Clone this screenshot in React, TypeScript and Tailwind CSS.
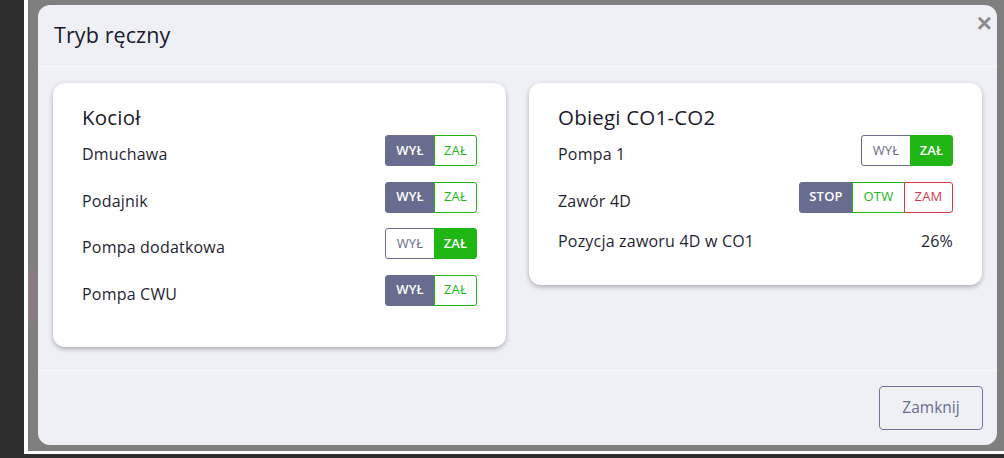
import { useState } from 'react';

type Tone = 'slate' | 'green' | 'red';

const activeCls: Record<Tone, string> = {
  slate: 'bg-[#686c8f] border-[#686c8f] text-white',
  green: 'bg-[#20b614] border-[#20b614] text-white',
  red: 'bg-[#d63a4a] border-[#d63a4a] text-white',
};

const idleCls: Record<Tone, string> = {
  slate: 'bg-white border-[#686c8f] text-[#686c8f]',
  green: 'bg-white border-[#20b614] text-[#20b614]',
  red: 'bg-white border-[#d63a4a] text-[#d63a4a]',
};

type Option = { label: string; tone: Tone; width: string };

function Segmented({ options, value, onChange }: { options: Option[]; value: number; onChange: (i: number) => void }) {
  return (
    <div className="flex h-[31px]">
      {options.map((o, i) => (
        <button
          key={o.label}
          onClick={() => onChange(i)}
          className={`${o.width} h-full border text-[13px] tracking-[0.2px] ${
            i === value ? `font-semibold ${activeCls[o.tone]}` : `font-medium ${idleCls[o.tone]}`
          } ${i === 0 ? 'rounded-l-[3px]' : '-ml-px'} ${i === options.length - 1 ? 'rounded-r-[3px]' : ''}`}
        >
          {o.label}
        </button>
      ))}
    </div>
  );
}

const onOff: Option[] = [
  { label: 'WYŁ', tone: 'slate', width: 'w-[50px]' },
  { label: 'ZAŁ', tone: 'green', width: 'w-[43px]' },
];

const valve: Option[] = [
  { label: 'STOP', tone: 'slate', width: 'w-[54px]' },
  { label: 'OTW', tone: 'green', width: 'w-[53px]' },
  { label: 'ZAM', tone: 'red', width: 'w-[49px]' },
];

function Row({ label, children }: { label: string; children: React.ReactNode }) {
  return (
    <div className="mb-[15.5px] flex items-center justify-between">
      <span className="pt-[7px] text-[16px] leading-[22px] tracking-[0.2px] text-[#1f1f33]">{label}</span>
      {children}
    </div>
  );
}

function Card({ title, children }: { title: string; children: React.ReactNode }) {
  return (
    <div className="rounded-[12px] bg-white px-[29px] pt-[20px] pb-[26px] shadow-[0_2px_5px_rgba(0,0,0,0.28)]">
      <h3 className="mb-[4px] text-[20.5px] font-medium leading-[28px] tracking-[0.2px] text-[#1a1a2e]">{title}</h3>
      {children}
    </div>
  );
}

export default function App() {
  const [boiler, setBoiler] = useState([0, 0, 1, 0]);
  const [pump1, setPump1] = useState(1);
  const [valve4d, setValve4d] = useState(0);

  const boilerRows = ['Dmuchawa', 'Podajnik', 'Pompa dodatkowa', 'Pompa CWU'];

  return (
    <div className="flex h-[458px] w-[1004px] overflow-hidden bg-[#2e2e2e] pb-[4px] pl-[24px] font-['Open_Sans',sans-serif]">
      <div className="relative flex-1 border-b-[3px] border-l-4 border-white bg-[#7f7f7f] pl-[10px] pt-[5px]">
        <div className="absolute left-0 top-[270px] h-[52px] w-[10px] bg-[#8b7b82]" />
        <div className="relative flex h-[440px] w-[959px] flex-col rounded-[12px] bg-[#eff0f5]">
          <div className="flex h-[62px] items-center justify-between border-b border-[#fbfbfd] pl-[16px] pr-[5px]">
            <h2 className="text-[21.5px] font-medium tracking-[0.1px] text-[#1a1a2e]">Tryb ręczny</h2>
            <button className="-mt-[25px] font-['Liberation_Sans',sans-serif] text-[26px] font-bold leading-none text-[#8c8c8c]">×</button>
          </div>
          <div className="grid flex-1 grid-cols-2 items-start gap-[23px] border-b border-[#fbfbfd] px-[15px] pt-[16px]">
            <Card title="Kocioł">
              {boilerRows.map((r, i) => (
                <Row key={r} label={r}>
                  <Segmented
                    options={onOff}
                    value={boiler[i]}
                    onChange={(v) => setBoiler((b) => b.map((x, j) => (j === i ? v : x)))}
                  />
                </Row>
              ))}
            </Card>
            <Card title="Obiegi CO1-CO2">
              <Row label="Pompa 1">
                <Segmented options={onOff} value={pump1} onChange={setPump1} />
              </Row>
              <Row label="Zawór 4D">
                <Segmented options={valve} value={valve4d} onChange={setValve4d} />
              </Row>
              <div className="mb-[5px] flex h-[26px] items-center justify-between text-[16px] tracking-[0.2px] text-[#1f1f33]">
                <span>Pozycja zaworu 4D w CO1</span>
                <span>26%</span>
              </div>
            </Card>
          </div>
          <div className="flex h-[74px] items-center justify-end pr-[14px]">
            <button className="h-[44px] w-[104px] rounded-[4px] border border-[#72759a] text-[15.5px] text-[#686c8f]">
              Zamknij
            </button>
          </div>
        </div>
      </div>
    </div>
  );
}
